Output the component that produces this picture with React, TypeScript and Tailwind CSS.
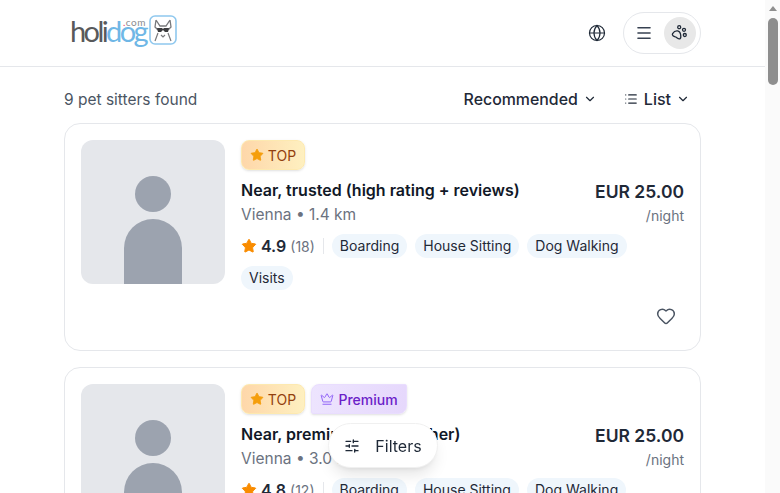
import { ChevronDown, Globe, Heart, List, Menu, SlidersHorizontal, Crown, Star } from "lucide-react";

interface Sitter {
  title: string;
  city: string;
  km: string;
  rating: string;
  reviews: number;
  premium?: boolean;
  top?: boolean;
}

const sitters: Sitter[] = [
  { title: "Near, trusted (high rating + reviews)", city: "Vienna", km: "1.4 km", rating: "4.9", reviews: 18, top: true },
  { title: "Near, premium (a bit farther)", city: "Vienna", km: "3.0 km", rating: "4.8", reviews: 12, top: true, premium: true },
  { title: "Near, new sitter", city: "Vienna", km: "3.4 km", rating: "4.7", reviews: 9, top: true },
  { title: "Near, available", city: "Vienna", km: "4.1 km", rating: "4.6", reviews: 7 },
  { title: "Near, experienced", city: "Vienna", km: "5.2 km", rating: "4.6", reviews: 21 },
  { title: "Mid distance, trusted", city: "Vienna", km: "6.0 km", rating: "4.5", reviews: 14 },
  { title: "Mid distance, new", city: "Vienna", km: "7.3 km", rating: "4.4", reviews: 5 },
  { title: "Far, premium", city: "Vienna", km: "9.8 km", rating: "4.3", reviews: 11 },
  { title: "Far, available", city: "Vienna", km: "12.5 km", rating: "4.2", reviews: 3 },
];

const services = ["Boarding", "House Sitting", "Dog Walking", "Visits"];

function Logo() {
  return (
    <div className="flex items-start ml-[6px] h-[34px] font-['Lato',sans-serif] select-none">
      <div className="relative flex items-start text-[29px] leading-[30px] tracking-[-2.6px] font-normal">
        <span className="text-[#58595b]">holi</span>
        <span className="text-[#6fb7e6]">dog</span>
        {/* .com sits over the end of the word */}
        <span className="absolute right-0 top-[1px] text-[10px] leading-[10px] tracking-[0.5px] text-[#8a8c8f]">
          <span className="text-[#e8336d]">.</span>com
        </span>
      </div>
      <svg width="28" height="30" viewBox="0 0 28 30" className="ml-[3px] mt-[-1px]">
        <rect x="1" y="1" width="26" height="28" rx="5" fill="#fff" stroke="#8fc8ee" strokeWidth="1.6" />
        <path d="M7 5l4 6h6l4-6M7 5l-1 7 3 3M21 5l1 7-3 3" fill="none" stroke="#77787b" strokeWidth="1.3" />
        <path d="M8 13h5l1 1 1-1h5l-1 4h-3l-2-2-2 2H9z" fill="#3c3d3f" />
        <path d="M9 18l-3 8M19 18l3 8M12 20l2 2 2-2" fill="none" stroke="#77787b" strokeWidth="1.2" />
      </svg>
    </div>
  );
}

function PawIcon() {
  return (
    <svg width="20" height="20" viewBox="0 0 20 20" fill="none" stroke="#1f2937" strokeWidth="1.3">
      <path d="M2.6 10.6c1.2-1.9 3-3 5-2.7 1.8.3 2.7 1.7 3 3.6.3 2 .7 3.6-.7 4.3-1.3.5-2.5-.7-3.6-1.5-1.1-.8-2.4-.7-3.3-1.5-.7-.6-.8-1.4-.4-2.2z" />
      <circle cx="9.2" cy="4.2" r="1.5" />
      <circle cx="14" cy="6.8" r="1.5" />
      <circle cx="14.8" cy="12" r="1.5" />
    </svg>
  );
}

function Header() {
  return (
    <header className="h-[67px] border-b border-[#e5e7eb] px-16 flex items-center justify-between bg-white">
      <Logo />
      <div className="flex items-center gap-[17px]">
        <Globe className="w-[18px] h-[18px] text-[#1f2937]" strokeWidth={1.6} />
        <div className="w-[78px] h-[42px] rounded-full border border-[#e5e7eb] flex items-center justify-between pl-[11px] pr-[4px]">
          <Menu className="w-[18px] h-[18px] text-[#374151]" strokeWidth={2.2} />
          <div className="w-[32px] h-[32px] rounded-full bg-[#e8e8e8] flex items-center justify-center">
            <PawIcon />
          </div>
        </div>
      </div>
    </header>
  );
}

function TopBadge() {
  return (
    <span className="h-[30px] w-[64px] rounded-[8px] border border-[#fde9b0] bg-gradient-to-r from-[#fed7aa] to-[#fef0c0] shadow-sm flex items-center justify-center gap-[4px] text-[14px] text-[#92400e]">
      <Star className="w-[14px] h-[14px] text-[#f59e0b]" fill="#f59e0b" strokeWidth={1.5} />
      TOP
    </span>
  );
}

function PremiumBadge() {
  return (
    <span className="h-[30px] w-[96px] rounded-tr-[2px] rounded-bl-[2px] rounded-tl-[8px] rounded-br-[8px] border border-[#e9ddfe] bg-gradient-to-r from-[#ede4fe] to-[#e6d8fc] shadow-sm flex items-center justify-center gap-[4px] text-[14px] font-medium text-[#6b21c8]">
      <Crown className="w-[14px] h-[14px] text-[#8b5cf6]" strokeWidth={1.6} />
      Premium
    </span>
  );
}

function SitterCard({ sitter }: { sitter: Sitter }) {
  return (
    <article className="relative h-[228px] rounded-[16px] border border-[#e5e7eb] bg-white p-4 flex gap-4 overflow-hidden">
      {/* Placeholder photo */}
      <div className="w-[144px] h-[144px] shrink-0 rounded-[12px] bg-[#e5e7eb] overflow-hidden flex flex-col items-center">
        <div className="w-[36px] h-[36px] rounded-full bg-[#9ca3af] mt-[36px]" />
        <div className="w-[58px] flex-1 mt-[7px] rounded-t-[29px] bg-[#9ca3af]" />
      </div>

      <div className="flex-1 min-w-0 flex flex-col">
        <div className="flex gap-[6px] h-[30px]">
          {sitter.top && <TopBadge />}
          {sitter.premium && <PremiumBadge />}
        </div>
        <div className="flex justify-between mt-[9px]">
          <div className="min-w-0">
            <h3 className="text-[16px] leading-[22px] font-semibold text-[#111827]">{sitter.title}</h3>
            <p className="text-[15.5px] leading-[24px] text-[#6b7280] mt-[2px]">
              {sitter.city} • {sitter.km}
            </p>
          </div>
          <div className="text-right shrink-0 pt-[1px]">
            <div className="text-[17.5px] leading-[24px] font-semibold text-[#1f2937]">EUR 25.00</div>
            <div className="text-[14px] leading-[20px] text-[#6b7280] mt-[2px]">/night</div>
          </div>
        </div>
        <div className="flex flex-wrap items-center gap-x-[8px] gap-y-[8px] mt-[7px] w-[400px]">
          <div className="flex items-center h-[24px]">
            <Star className="w-[16px] h-[16px] text-[#f98c00]" fill="#f98c00" strokeWidth={1.5} />
            <span className="ml-[4px] text-[16px] font-semibold text-[#1f2937]">{sitter.rating}</span>
            <span className="ml-[4px] text-[14px] text-[#6b7280]">({sitter.reviews})</span>
            <span className="ml-[8px] w-px h-[16px] bg-[#e5e7eb]" />
          </div>
          {services.map((s) => (
            <span key={s} className="h-[24px] px-[8px] rounded-full bg-[#eff6fc] text-[14px] leading-[24px] text-[#1f2937]">
              {s}
            </span>
          ))}
        </div>
      </div>

      <Heart className="absolute right-[24px] bottom-[24px] w-[20px] h-[20px] text-[#4b5563]" strokeWidth={1.8} />
    </article>
  );
}

function Scrollbar() {
  return (
    <div className="fixed right-0 top-0 bottom-0 w-[15px] bg-[#fafafa] flex flex-col items-center">
      <div className="mt-[6px] w-0 h-0 border-x-[4px] border-x-transparent border-b-[5px] border-b-[#8e8e8e]" />
      <div className="mt-[7px] w-[10px] h-[67px] rounded-full bg-[#8e8e8e]" />
    </div>
  );
}

export default function App() {
  return (
    <div className="w-[765px] pb-[24px] bg-white font-['Inter',sans-serif]">
      <Header />
      <main className="px-16">
        <div className="h-[56px] pt-[8px] flex items-center justify-between">
          <span className="text-[15.5px] leading-[25px] text-[#4b5563]">9 pet sitters found</span>
          <div className="flex items-center">
            <button className="flex items-center gap-[5px] text-[15.9px] leading-[25px] font-medium text-[#1f2937]">
              Recommended
              <ChevronDown className="w-[14px] h-[14px]" strokeWidth={2} />
            </button>
            <button className="flex items-center ml-[27px] mr-[11px] text-[16px] leading-[24px] font-medium text-[#1f2937]">
              <List className="w-[14px] h-[14px] mr-[6px]" strokeWidth={2} />
              List
              <ChevronDown className="w-[14px] h-[14px] ml-[5px]" strokeWidth={2} />
            </button>
          </div>
        </div>
        <div className="flex flex-col gap-4">
          {sitters.map((s) => (
            <SitterCard key={s.title} sitter={s} />
          ))}
        </div>
      </main>

      <button className="fixed left-[328px] top-[423px] w-[110px] h-[45px] rounded-full bg-white border border-[#f0f0f0] shadow-lg flex items-center justify-center gap-[15px] text-[16px] text-[#1f2937]">
        <SlidersHorizontal className="w-[16px] h-[16px]" strokeWidth={2} />
        Filters
      </button>
      <Scrollbar />
    </div>
  );
}
